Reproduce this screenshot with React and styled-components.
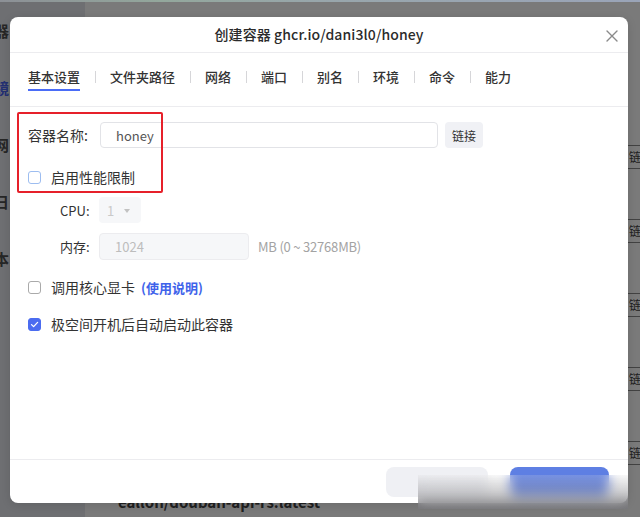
import React from "react";
import styled, { createGlobalStyle } from "styled-components";

const Global = createGlobalStyle`
  html, body { margin: 0; padding: 0; width: 640px; height: 517px; overflow: hidden; }
  body { font-family: "Noto Sans CJK SC", "Noto Sans", sans-serif; background: #fff; }
  * { box-sizing: border-box; }
`;

const Page = styled.div`
  position: relative;
  width: 640px;
  height: 517px;
  overflow: hidden;
  display: flex;
  flex-direction: column;
`;

const TopStrip = styled.div`
  height: 2px;
  flex: none;
  position: relative;
  z-index: 3;
  background: linear-gradient(90deg, #8c9096 0%, #93a79c 25%, #98a6ab 50%, #9aa4b8 100%);
`;

const Body = styled.div`
  flex: 1;
  display: flex;
`;

const Sidebar = styled.div`
  width: 85px;
  flex: none;
  background: #e7e9ee;
  display: flex;
  flex-direction: column;
`;

const NavItem = styled.div`
  height: 57px;
  display: flex;
  align-items: center;
  font-size: 15px;
  font-weight: 600;
  color: ${(p) => (p.$active ? "#4a63ee" : "#505050")};
  span { margin-left: -6px; }
`;

const Main = styled.div`
  flex: 1;
  background: #ffffff;
  padding-top: 118px;
  display: flex;
  flex-direction: column;
  margin-right: -40px;
`;

const ListRow = styled.div`
  height: 74px;
  flex: none;
  display: grid;
  grid-template-columns: 1fr 52px;
  padding-left: 33px;
`;

const RowName = styled.div`
  padding-top: 4px;
  font-size: 15px;
  font-weight: 600;
  line-height: 16px;
  color: #444;
`;

const RowButton = styled.div`
  align-self: center;
  height: 24px;
  border-top: 1px solid #8a8a8a;
  border-bottom: 1px solid #8a8a8a;
  font-size: 12px;
  line-height: 22px;
  padding-left: 1px;
  color: #444;
`;

const Mask = styled.div`
  position: absolute;
  inset: 0;
  background: rgba(0, 0, 0, 0.52);
  z-index: 1;
`;

const Dialog = styled.div`
  position: absolute;
  left: 10px;
  top: 17px;
  width: 618px;
  height: 486px;
  background: #fff;
  border-radius: 8px;
  z-index: 2;
  display: flex;
  flex-direction: column;
  box-shadow: 0 2px 10px rgba(0, 0, 0, 0.12);
`;

const Header = styled.div`
  height: 36px;
  flex: none;
  display: grid;
  grid-template-columns: 1fr auto 1fr;
  align-items: center;
  border-bottom: 1px solid #ececef;
`;

const Title = styled.div`
  grid-column: 2;
  font-size: 14px;
  font-weight: 500;
  color: #2b2b2b;
  letter-spacing: 0.1px;
  margin-top: -1px;
`;

const Close = styled.div`
  grid-column: 3;
  justify-self: end;
  margin-right: 10px;
  margin-top: 3px;
  width: 12px;
  height: 12px;
  display: flex;
`;

const TabBar = styled.div`
  height: 54px;
  flex: none;
  display: flex;
  align-items: flex-start;
  padding: 15px 0 0 18px;
  border-bottom: 1px solid #ececef;
`;

const Tab = styled.div`
  font-size: 13px;
  font-weight: 500;
  line-height: 18px;
  color: #333;
  padding-bottom: 3px;
  border-bottom: 2px solid ${(p) => (p.$active ? "#4a6cf7" : "transparent")};
`;

const Sep = styled.span`
  width: 1px;
  height: 12px;
  margin: 3px 14px 0 15px;
  background: #d6d6d9;
`;

const Content = styled.div`
  flex: 1;
  position: relative;
  padding: 15px 0 0 18px;
  display: flex;
  flex-direction: column;
`;

const Row = styled.div`
  display: flex;
  align-items: center;
  height: ${(p) => p.$h || 26}px;
  margin-top: ${(p) => p.$mt || 0}px;
  padding-left: ${(p) => p.$indent || 0}px;
`;

const Label = styled.div`
  width: ${(p) => p.$w}px;
  flex: none;
  font-size: ${(p) => p.$size || 14}px;
  color: #333;
`;

const TextInput = styled.div`
  width: ${(p) => p.$w}px;
  height: ${(p) => p.$h || 26}px;
  border: 1px solid ${(p) => (p.$disabled ? "#ececef" : "#e2e3e7")};
  background: ${(p) => (p.$disabled ? "#f6f7f9" : "#fff")};
  border-radius: 4px;
  padding-left: 15px;
  display: flex;
  align-items: center;
  font-size: 13px;
  color: ${(p) => (p.$disabled ? "#bdbdbd" : "#555")};
`;

const SmallButton = styled.div`
  margin-left: 7px;
  width: 38px;
  height: 26px;
  background: #f0f1f5;
  border-radius: 4px;
  display: flex;
  align-items: center;
  justify-content: center;
  font-size: 12px;
  color: #333;
`;

const Select = styled.div`
  width: 42px;
  height: 26px;
  background: #f6f7f9;
  border-radius: 4px;
  display: flex;
  align-items: center;
  padding-left: 8px;
  gap: 10px;
  font-size: 13px;
  color: #c9c9c9;
`;

const Caret = styled.span`
  width: 0;
  height: 0;
  border-left: 3.5px solid transparent;
  border-right: 3.5px solid transparent;
  border-top: 4px solid #c2c2c2;
  margin-top: 1px;
`;

const Unit = styled.div`
  margin-left: 9px;
  font-size: 13px;
  letter-spacing: -0.2px;
  color: #a3a3a3;
`;

const Box = styled.span`
  width: 13px;
  height: 13px;
  flex: none;
  border-radius: 3px;
  border: 1px solid ${(p) => (p.$checked ? "#4b6cf0" : p.$tone === "blue" ? "#9dbdf0" : "#aaaaaa")};
  background: ${(p) => (p.$checked ? "#4b6cf0" : "#fff")};
  display: flex;
  align-items: center;
  justify-content: center;
`;

const CheckText = styled.span`
  margin-left: 10px;
  font-size: 14px;
  color: #333;
`;

const HelpLink = styled.span`
  margin-left: 6px;
  font-size: 13px;
  font-weight: 600;
  color: #3f63ea;
`;

const Highlight = styled.div`
  position: absolute;
  left: 7px;
  top: 5px;
  width: 146px;
  height: 81px;
  border: 2px solid #e6202a;
  border-radius: 2px;
`;

const Footer = styled.div`
  height: 44px;
  flex: none;
  border-top: 1px solid #ececef;
  display: flex;
  justify-content: flex-end;
  align-items: flex-start;
  gap: 22px;
  padding: 7px 19px 0 0;
`;

const FootButton = styled.div`
  width: ${(p) => p.$w}px;
  height: 30px;
  border-radius: 8px;
  background: ${(p) => (p.$primary ? "#5e7fe3" : "#eff0f4")};
`;

const Watermark = styled.div`
  position: absolute;
  left: 418px;
  top: 475px;
  width: 210px;
  height: 34px;
  z-index: 4;
  backdrop-filter: blur(6px);
  background: linear-gradient(180deg, rgba(220, 220, 220, 0.2) 0%, rgba(115, 115, 120, 0.65) 100%);
`;

const Check = () => (
  <svg width="9" height="9" viewBox="0 0 9 9">
    <path d="M1.5 4.6 L3.6 6.6 L7.6 2.4" fill="none" stroke="#fff" strokeWidth="1.3" strokeLinecap="round" strokeLinejoin="round" />
  </svg>
);

const tabs = ["基本设置", "文件夹路径", "网络", "端口", "别名", "环境", "命令", "能力"];

export default function App() {
  return (
    <>
      <Global />
      <Page>
        <TopStrip />
        <Body>
          <Sidebar>
            <NavItem><span>器</span></NavItem>
            <NavItem $active><span>镜</span></NavItem>
            <NavItem><span>网</span></NavItem>
            <NavItem><span>日</span></NavItem>
            <NavItem><span>本</span></NavItem>
          </Sidebar>
          <Main>
            {["a", "b", "c", "d", "e"].map((k) => (
              <ListRow key={k}>
                <RowName />
                <RowButton>链接</RowButton>
              </ListRow>
            ))}
            <ListRow>
              <RowName>eallon/douban-api-rs:latest</RowName>
              <span />
            </ListRow>
          </Main>
        </Body>
        <Mask />
        <Dialog>
          <Header>
            <Title>创建容器 ghcr.io/dani3l0/honey</Title>
            <Close>
              <svg width="12" height="12" viewBox="0 0 12 12">
                <path d="M1 1 L11 11 M11 1 L1 11" stroke="#8a8a8a" strokeWidth="1.4" strokeLinecap="round" />
              </svg>
            </Close>
          </Header>
          <TabBar>
            {tabs.map((t, i) => (
              <React.Fragment key={t}>
                {i > 0 && <Sep />}
                <Tab $active={i === 0}>{t}</Tab>
              </React.Fragment>
            ))}
          </TabBar>
          <Content>
            <Row>
              <Label $w={72}>容器名称:</Label>
              <TextInput $w={338}>honey</TextInput>
              <SmallButton>链接</SmallButton>
            </Row>
            <Row $mt={16}>
              <Box $tone="blue" />
              <CheckText>启用性能限制</CheckText>
            </Row>
            <Row $mt={7} $indent={32}>
              <Label $w={39} $size={13}>CPU:</Label>
              <Select>1<Caret /></Select>
            </Row>
            <Row $mt={10} $h={27} $indent={32}>
              <Label $w={39} $size={13}>内存:</Label>
              <TextInput $w={150} $h={27} $disabled>1024</TextInput>
              <Unit>MB (0 ~ 32768MB)</Unit>
            </Row>
            <Row $mt={14}>
              <Box />
              <CheckText>调用核心显卡</CheckText>
              <HelpLink>(使用说明)</HelpLink>
            </Row>
            <Row $mt={11}>
              <Box $checked><Check /></Box>
              <CheckText>极空间开机后自动启动此容器</CheckText>
            </Row>
            <Highlight />
          </Content>
          <Footer>
            <FootButton $w={102} />
            <FootButton $w={99} $primary />
          </Footer>
        </Dialog>
        <Watermark />
      </Page>
    </>
  );
}
